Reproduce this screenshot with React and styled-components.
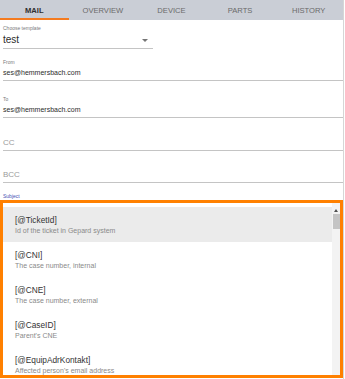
import React from "react";
import styled, { createGlobalStyle } from "styled-components";

const Global = createGlobalStyle`
  html, body { margin: 0; padding: 0; background: #fff; }
  body { font-family: "Liberation Sans", Arial, sans-serif; }
  * { box-sizing: border-box; }
`;

const Page = styled.div`
  width: 344px;
  height: 379px;
  border-right: 1px solid #d6d6d6;
  display: flex;
  flex-direction: column;
  overflow: hidden;
`;

const TabBar = styled.div`
  display: flex;
  height: 20px;
  background: #caced6;
`;

const Tab = styled.div`
  flex: 1;
  display: flex;
  align-items: center;
  justify-content: center;
  font-size: 7.6px;
  color: ${(p) => (p.$active ? "#2f2f2f" : "#6a6a6a")};
  font-weight: ${(p) => (p.$active ? 700 : 400)};
  border-bottom: 2px solid ${(p) => (p.$active ? "#f47b20" : "transparent")};
  padding-top: 2px;
`;

const Form = styled.div`
  padding: 0 0 0 3px;
  display: flex;
  flex-direction: column;
`;

const Field = styled.div`
  margin-top: ${(p) => p.$mt}px;
  width: ${(p) => (p.$w ? `${p.$w}px` : "auto")};
  border-bottom: ${(p) => (p.$noLine ? "none" : "1px solid #c4c4c4")};
`;

const Label = styled.div`
  font-size: 5px;
  line-height: 8px;
  height: 8px;
  color: ${(p) => (p.$focus ? "#3f51b5" : "#7a7a7a")};
`;

const Value = styled.div`
  font-size: ${(p) => p.$size || 7}px;
  line-height: ${(p) => p.$lh || 14}px;
  height: ${(p) => p.$lh || 14}px;
  color: ${(p) => (p.$placeholder ? "#9a9a9a" : "#2c2c2c")};
  display: flex;
  align-items: center;
  justify-content: space-between;
`;

const Caret = styled.span`
  width: 0;
  height: 0;
  border-left: 3px solid transparent;
  border-right: 3px solid transparent;
  border-top: 3px solid #757575;
  margin-right: 5px;
  margin-top: 1px;
`;

const Popup = styled.div`
  height: 178px;
  border: 3px solid #ff8000;
  display: flex;
  background: #fff;
`;

const List = styled.div`
  flex: 1;
  overflow: hidden;
  padding-top: 4px;
`;

const Item = styled.div`
  height: 35px;
  padding: 7px 12px 0 12px;
  background: ${(p) => (p.$hl ? "#ebebeb" : "transparent")};
`;

const ItemTitle = styled.div`
  font-size: 8.3px;
  line-height: 12px;
  color: #333;
`;

const ItemDesc = styled.div`
  font-size: 7px;
  line-height: 10px;
  color: #8a8a8a;
`;

const ScrollTrack = styled.div`
  width: 8px;
  background: #f3f3f3;
  display: flex;
  flex-direction: column;
  align-items: center;
`;

const ScrollArrow = styled.div`
  width: 0;
  height: 0;
  margin-top: 6px;
  border-left: 2.5px solid transparent;
  border-right: 2.5px solid transparent;
  border-bottom: 3px solid #505050;
`;

const ScrollThumb = styled.div`
  width: 7px;
  height: 15px;
  margin-top: 2px;
  background: #c4c4c4;
`;

const items = [
  ["[@TicketId]", "Id of the ticket in Gepard system"],
  ["[@CNI]", "The case number, internal"],
  ["[@CNE]", "The case number, external"],
  ["[@CaseID]", "Parent's CNE"],
  ["[@EquipAdrKontakt]", "Affected person's email address"],
];

export default function App() {
  return (
    <Page>
      <Global />
      <TabBar>
        <Tab $active>MAIL</Tab>
        <Tab>OVERVIEW</Tab>
        <Tab>DEVICE</Tab>
        <Tab>PARTS</Tab>
        <Tab>HISTORY</Tab>
      </TabBar>
      <Form>
        <Field $mt={4} $w={150}>
          <Label>Choose template</Label>
          <Value $size={10} $lh={16}>
            test
            <Caret />
          </Value>
        </Field>
        <Field $mt={9}>
          <Label>From</Label>
          <Value>ses@hemmersbach.com</Value>
        </Field>
        <Field $mt={14}>
          <Label>To</Label>
          <Value>ses@hemmersbach.com</Value>
        </Field>
        <Field $mt={18}>
          <Value $placeholder $size={8}>CC</Value>
        </Field>
        <Field $mt={17}>
          <Value $placeholder $size={8}>BCC</Value>
        </Field>
        <Field $mt={9} $noLine>
          <Label $focus>Subject</Label>
        </Field>
      </Form>
      <Popup>
        <List>
          {items.map(([t, d], i) => (
            <Item key={t} $hl={i === 0}>
              <ItemTitle>{t}</ItemTitle>
              <ItemDesc>{d}</ItemDesc>
            </Item>
          ))}
        </List>
        <ScrollTrack>
          <ScrollArrow />
          <ScrollThumb />
        </ScrollTrack>
      </Popup>
    </Page>
  );
}
